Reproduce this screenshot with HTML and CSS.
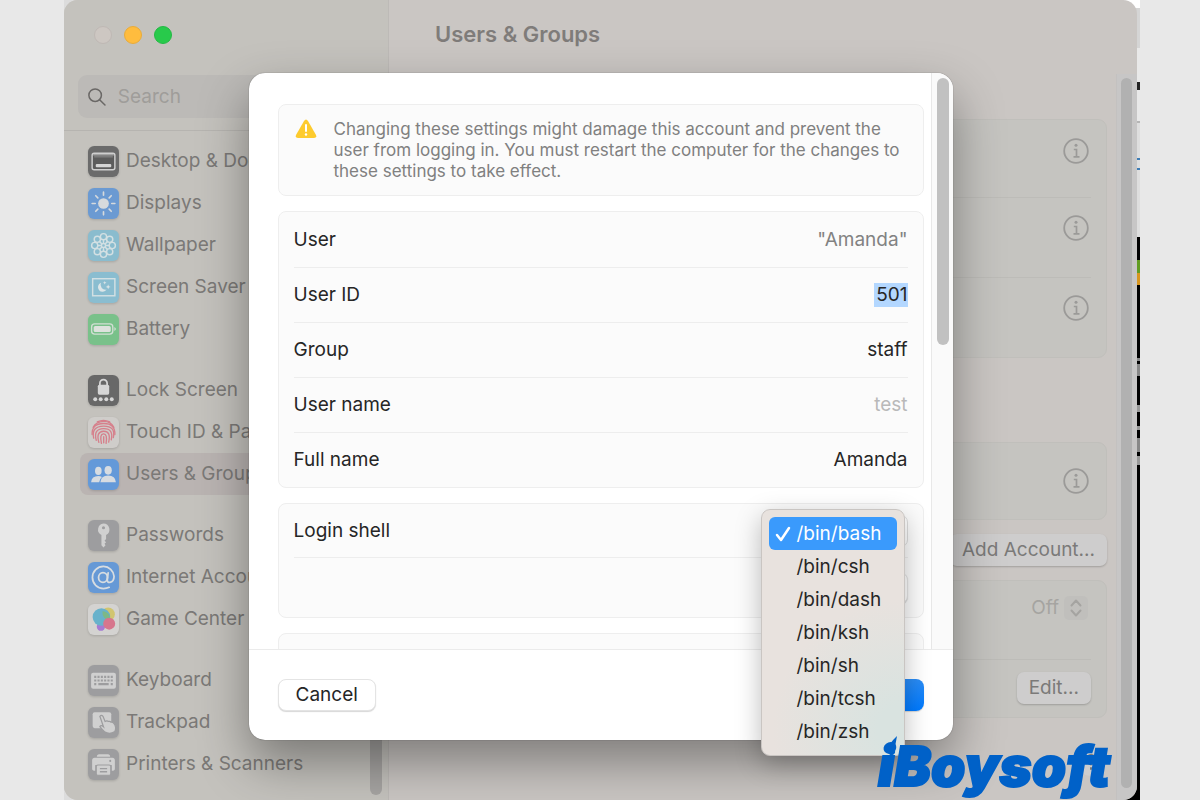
FILE: index.html
```html
<!DOCTYPE html>
<html lang="en">
<head>
    <meta charset="UTF-8">
    <meta name="viewport" content="width=device-width, initial-scale=1.0">
    <title>Users &amp; Groups</title>
    <link rel="stylesheet" href="styles.css">
</head>
<body>
    <div class="desktop">
        <div class="window">
            <aside class="sidebar">
                <div class="lights">
                    <span class="light"></span>
                    <span class="light yellow"></span>
                    <span class="light green"></span>
                </div>
                <label class="search">
                    <svg width="20" height="20" viewBox="0 0 20 20" fill="none" stroke="#6a6866" stroke-width="1.700" stroke-linecap="round"><circle cx="8" cy="8" r="7"/><path d="M13 13l6 6"/></svg>
                    <input type="search" placeholder="Search" aria-label="Search">
                </label>
                <nav class="nav">
                    <div class="nav-group">
                        <a href="#"><svg class="icon" viewBox="0 0 30 30"><rect width="30" height="30" rx="6" fill="#6b6b6b"/><rect x="4" y="7" width="22" height="16" rx="2" fill="#5c5c5c" stroke="#cfcfcf" stroke-width="1.4"/><path d="M5 8.500h20" stroke="#a5a5a5" stroke-width="1.500"/><path d="M6 10.500h18" stroke="#8d8d8d"/><rect x="7.500" y="17.500" width="15" height="3" rx="1" fill="#d5d5d5"/></svg>Desktop &amp; Dock</a>
                        <a href="#"><svg class="icon" viewBox="0 0 30 30"><rect width="30" height="30" rx="6" fill="#6b9ad2"/><circle cx="15" cy="15" r="5.200" fill="#d6dadd"/><path d="M15 4v3M15 23v3M4 15h3M23 15h3M7.500 7.500l2 2M20.500 20.500l2 2M7.500 22.500l2-2M20.500 9.500l2-2" stroke="#d6dadd" stroke-width="1.600" stroke-linecap="round"/></svg>Displays</a>
                        <a href="#"><svg class="icon" viewBox="0 0 30 30"><rect width="30" height="30" rx="6" fill="#8abcce"/><g fill="none" stroke="#d3e0e3" stroke-width="1.400"><circle cx="15" cy="6.500" r="3"/><circle cx="21" cy="9" r="3"/><circle cx="23.500" cy="15" r="3"/><circle cx="21" cy="21" r="3"/><circle cx="15" cy="23.500" r="3"/><circle cx="9" cy="21" r="3"/><circle cx="6.500" cy="15" r="3"/><circle cx="9" cy="9" r="3"/><circle cx="15" cy="15" r="2"/><path d="M15 9v4M15 17v4M9 15h4M17 15h4M11 11l2.500 2.500M16.500 16.500L19 19M11 19l2.500-2.500M16.500 13.500L19 11"/></g></svg>Wallpaper</a>
                        <a href="#"><svg class="icon" viewBox="0 0 30 30"><rect width="30" height="30" rx="6" fill="#8abdd0"/><rect x="4.500" y="6.500" width="21.500" height="16.500" fill="none" stroke="#d3e0e3" stroke-width="1.400"/><path d="M12.500 10.500a4.500 4.500 0 1 0 5.500 6.500a4.800 4.800 0 0 1-5.500-6.500z" fill="#dde6e8"/><path d="M19.500 12l.7 1.700 1.700.7-1.700.7-.7 1.700-.7-1.700-1.700-.7 1.700-.7zM16.200 8.800l.5 1.200 1.200.5-1.200.5-.5 1.200-.5-1.200-1.200-.5 1.200-.5z" fill="#dde6e8"/></svg>Screen Saver</a>
                        <a href="#"><svg class="icon" viewBox="0 0 30 30"><rect width="30" height="30" rx="6" fill="#79c18a"/><rect x="3.500" y="9.500" width="20.500" height="10" rx="3" fill="none" stroke="#d2dfd4" stroke-width="1.300"/><rect x="5.500" y="11.500" width="16.500" height="6" rx="1.500" fill="#dde2dd"/><path d="M25.500 12.500q3 2 0 4z" fill="#d2dfd4"/></svg>Battery</a>
                    </div>
                    <div class="nav-group">
                        <a href="#"><svg class="icon" viewBox="0 0 30 30"><rect width="30" height="30" rx="6" fill="#686868"/><path d="M11.500 10.500v-2.500a3.500 3.500 0 0 1 7 0v2.500" fill="none" stroke="#d6d6d6" stroke-width="1.700"/><rect x="9.500" y="9.500" width="11" height="9.500" rx="1.500" fill="#d6d6d6"/><g fill="#d6d6d6"><circle cx="7" cy="23.500" r="1.900"/><circle cx="12.300" cy="23.500" r="1.900"/><circle cx="17.700" cy="23.500" r="1.900"/><circle cx="23" cy="23.500" r="1.900"/></g></svg>Lock Screen</a>
                        <a href="#"><svg class="icon" viewBox="0 0 30 30"><rect width="30" height="30" rx="6" fill="#cfcdca"/><g fill="none" stroke="#d67f8b" stroke-width="1.300" stroke-linecap="round"><path d="M9 4.800q6-3 12 0"/><path d="M5 10q3-5.500 10-5.700T25 10"/><path d="M4 17q-.5-10.500 11-10.700T26 17"/><path d="M5.500 20.500q-2.500-11.500 9.500-11.700T24.500 20"/><path d="M8 22.500q-3-11 7-11.200T22.500 22"/><path d="M10.500 24.500q-3-10.500 4.500-10.700t5 10.500"/><path d="M13 25.500q-2-9 2-9.200t2.500 9.200M15.200 19v6"/></g></svg>Touch ID &amp; Password</a>
                        <a href="#" class="active"><svg class="icon" viewBox="0 0 30 30"><rect width="30" height="30" rx="6" fill="#6399d9"/><g fill="#d7dce1"><ellipse cx="10" cy="11.500" rx="3.200" ry="3.900"/><path d="M3 22.500q.5-6 7-6 2 0 3.500.8-2.500 2-2.700 5.200z"/><ellipse cx="19.500" cy="11" rx="3.500" ry="4.200"/><path d="M12 22.500q.5-6.500 7.500-6.500t7.500 6.500z"/></g></svg>Users &amp; Groups</a>
                    </div>
                    <div class="nav-group">
                        <a href="#"><svg class="icon" viewBox="0 0 30 30"><rect width="30" height="30" rx="6" fill="#9d9d9f"/><path fill-rule="evenodd" d="M15 3.500a5.800 5.800 0 0 1 2.500 11v4l-1.500 1.500 1.500 1.500-1.500 1.500 1 1.500-2 2-2-2v-10a5.800 5.800 0 0 1 2-11zm0 2.500a1.500 1.500 0 1 0 0 3a1.500 1.500 0 0 0 0-3z" fill="#d0d0d0"/></svg>Passwords</a>
                        <a href="#"><svg class="icon" viewBox="0 0 30 30"><rect width="30" height="30" rx="6" fill="#6699d6"/><g fill="none" stroke="#d8dde1" stroke-width="1.700" stroke-linecap="round"><ellipse cx="14.500" cy="15" rx="4.300" ry="4.800"/><path d="M19.500 10.500l-.8 6.500q-.2 3 2.500 2.800 4-.8 4-6A10.300 10.300 0 0 0 15 4.300A10.700 10.700 0 0 0 15 25.700q3 0 5.500-1.200"/></g></svg>Internet Accounts</a>
                        <a href="#"><svg class="icon" viewBox="0 0 30 30"><rect width="30" height="30" rx="6" fill="#d4d3d1"/><circle cx="19.500" cy="10" r="6.500" fill="#d1c570"/><circle cx="12.500" cy="22" r="4" fill="#a67bd3"/><circle cx="13" cy="12.500" r="8.500" fill="#68b2cb"/><path d="M14 7a7 7 0 0 1 7 9a8 8 0 0 1-7-9z" fill="#7db886"/><circle cx="20.500" cy="19" r="5.800" fill="#d7768d"/></svg>Game Center</a>
                    </div>
                    <div class="nav-group">
                        <a href="#"><svg class="icon" viewBox="0 0 30 30"><rect width="30" height="30" rx="6" fill="#9d9d9f"/><rect x="3" y="7.500" width="24" height="15.500" rx="2" fill="#d0d0d0"/><path d="M6 11.500h18M6 15h18" stroke="#9d9d9f" stroke-width="2" stroke-dasharray="2 1.200"/><path d="M6 18.500h2M10 18.500h10M22 18.500h2" stroke="#9d9d9f" stroke-width="2"/></svg>Keyboard</a>
                        <a href="#"><svg class="icon" viewBox="0 0 30 30"><rect width="30" height="30" rx="6" fill="#9d9d9f"/><rect x="4.500" y="5" width="18" height="15.500" rx="2" fill="#d0d0d0"/><path d="M11.500 9q1.500-2 3 0l2 5q2-1.200 3 0 2-.6 2.700.6 2-.2 2.800 1.200 3 3.700 1 8-5 3-9.500.5-2.500-2-5-5.300 1-2 3.500.1z" fill="#d0d0d0" stroke="#9d9d9f" stroke-width="1.200"/></svg>Trackpad</a>
                        <a href="#"><svg class="icon" viewBox="0 0 30 30"><rect width="30" height="30" rx="6" fill="#9d9d9f"/><path d="M8.500 7.500q0-2.500 2-2.500h9q2 0 2 2.500zM6.500 8.500h17q2.500 0 2.500 2.500v8q0 2-3 2v-5.500h-16v5.500q-3 0-3-2v-8q0-2.500 2.500-2.500z" fill="#d0d0d0"/><rect x="8" y="15.500" width="14" height="10" rx="1.500" fill="#d0d0d0" stroke="#9d9d9f"/><path d="M11.500 19h7M11.500 22h7" stroke="#9d9d9f" stroke-width="1.300"/><circle cx="21.500" cy="11.500" r="1" fill="#9d9d9f"/></svg>Printers &amp; Scanners</a>
                    </div>
                    <div class="nav-thumb"></div>
                </nav>
            </aside>

            <main class="main">
                <h1>Users &amp; Groups</h1>
                <div class="scroller">
                    <div class="content">
                        <section class="card">
                            <div class="account"><button class="info" aria-label="Info"><svg viewBox="0 0 26 26"><use href="#info"/></svg></button></div>
                            <div class="account"><button class="info" aria-label="Info"><svg viewBox="0 0 26 26"><use href="#info"/></svg></button></div>
                            <div class="account"><button class="info" aria-label="Info"><svg viewBox="0 0 26 26"><use href="#info"/></svg></button></div>
                        </section>
                        <section class="card groups">
                            <div class="account"><button class="info" aria-label="Info"><svg viewBox="0 0 26 26"><use href="#info"/></svg></button></div>
                        </section>
                        <button class="dim-button add">Add Account...</button>
                        <section class="card">
                            <div class="option">
                                <button class="picker">Off
                                    <svg width="24" height="24" viewBox="0 0 24 24" fill="none" stroke="#a5a4a1" stroke-width="2" stroke-linecap="round" stroke-linejoin="round"><path d="M7.500 9.500L12 4.500l4.500 5M7.500 14.500l4.500 5 4.500-5"/></svg>
                                </button>
                            </div>
                            <div class="option edit"><button class="dim-button">Edit...</button></div>
                        </section>
                        <button class="help" aria-label="Help">
                            <svg width="28" height="28" viewBox="0 0 28 28" fill="none" stroke="#7b7a79" stroke-width="2" stroke-linecap="round"><path d="M10 10q1-3 4-3t4 3q0 2-2 3.500t-2 3M14 20v1"/></svg>
                        </button>
                    </div>
                    <div class="track"><div class="thumb"></div></div>
                </div>
            </main>

            <form class="dialog">
                <div class="dialog-scroll">
                    <div class="dialog-content">
                        <div class="box warning">
                            <svg width="22" height="20" viewBox="0 0 22 20"><path d="M9 2q2-3 4 0l8 14q1 3-2 3H3q-3 0-2-3z" fill="#fdcb2e"/><path d="M11 6v6" stroke="#fff" stroke-width="2" stroke-linecap="round"/><circle cx="11" cy="15.500" r="1.200" fill="#fff"/></svg>
                            <p>Changing these settings might damage this account and prevent the user from logging in. You must restart the computer for the changes to these settings to take effect.</p>
                        </div>
                        <div class="box">
                            <div class="row"><span>User</span><span class="muted">"Amanda"</span></div>
                            <div class="row"><label for="uid">User ID</label><input id="uid" class="selected" type="text" value="501"></div>
                            <div class="row"><label for="group">Group</label><input id="group" type="text" value="staff"></div>
                            <div class="row"><label for="username">User name</label><input id="username" type="text" placeholder="test"></div>
                            <div class="row"><label for="fullname">Full name</label><input id="fullname" type="text" value="Amanda"></div>
                        </div>
                        <div class="box shell">
                            <div class="row">
                                <label for="shell">Login shell</label>
                                <select id="shell">
                                    <option>/bin/bash</option>
                                    <option>/bin/csh</option>
                                    <option>/bin/dash</option>
                                    <option>/bin/ksh</option>
                                    <option>/bin/sh</option>
                                    <option>/bin/tcsh</option>
                                    <option>/bin/zsh</option>
                                </select>
                            </div>
                            <div class="row"><button type="button" class="button small" aria-label="Choose"></button></div>
                        </div>
                        <div class="box"><div class="row"></div></div>
                    </div>
                    <div class="dialog-track"><div class="dialog-thumb"></div></div>
                </div>
                <div class="dialog-footer">
                    <button type="button" class="button">Cancel</button>
                    <button type="button" class="button primary" aria-label="OK"></button>
                </div>
                <ul class="menu">
                    <li class="checked"><svg width="16" height="16" viewBox="0 0 16 16" fill="none" stroke="#fff" stroke-width="2.500" stroke-linecap="round" stroke-linejoin="round"><path d="M2 9l4 5 8-12"/></svg>/bin/bash</li>
                    <li>/bin/csh</li>
                    <li>/bin/dash</li>
                    <li>/bin/ksh</li>
                    <li>/bin/sh</li>
                    <li>/bin/tcsh</li>
                    <li>/bin/zsh</li>
                </ul>
            </form>
        </div>
        <div class="brand">
            <svg width="12" height="20" viewBox="0 0 12 20"><path d="M10 0Q-2 11 2 18q3 3 6-1Q8 8 10 0z" fill="#0061c8"/></svg>
            <span>iBoysoft</span>
        </div>
    </div>

    <svg width="0" height="0" class="defs">
        <symbol id="info" viewBox="0 0 26 26">
            <circle cx="13" cy="13" r="11.800" fill="none" stroke="#9b9a98" stroke-width="1.800"/>
            <circle cx="13" cy="7.300" r="1.500" fill="#9b9a98"/>
            <path d="M10.800 11.500h2.700v7M10.500 18.800h6" fill="none" stroke="#9b9a98" stroke-width="1.700"/>
        </symbol>
    </svg>
</body>
</html>
```
FILE: styles.css
```css
* {
    box-sizing: border-box;
}
body {
    margin: 0;
    padding: 0 60px 0 64px;
    background-color: #e8e8e8;
    font-family: Inter, "Liberation Sans", sans-serif;
    font-size: 19px;
    line-height: 24px;
    color: #262626;
}
button, input, select {
    font: inherit;
    color: inherit;
}
.defs {
    position: absolute;
}

/* Strip of other windows behind the right edge */
.desktop {
    position: relative;
    height: 100vh;
    min-height: 800px;
    overflow: hidden;
    padding-right: 3px;
    background: linear-gradient(#fff 0 8px, #d5d5d5 8px 48px, #e9e9e9 48px 82px, #222 82px 90px, #e9e9e9 90px 121px, #b5b5b5 121px 123px, #dedede 123px 158px, #3f7db5 158px 160px, #dedede 160px 168px, #3f7db5 168px 170px, #dedede 170px 237px, #000 237px 260px, #619c22 260px 273px, #d8961f 273px 285px, #000 285px 358px, #888 358px 361px, #000 361px 364px, #888 364px 376px, #000 376px 405px, #999 405px 412px, #000 412px 426px, #999 426px 430px, #000 430px 438px, #888 438px 452px, #000 452px 456px, #999 456px 465px, #000 465px) right / 16px 100% no-repeat #dcdcdc;
}
.window {
    position: relative;
    display: flex;
    height: 100%;
    overflow: hidden;
    border-radius: 14px;
    background-color: #cac6c3;
}

/* Sidebar */
.sidebar {
    display: flex;
    flex-direction: column;
    width: 325px;
    border-right: 1px solid #bdbab7;
    background-color: #c4c2bd;
}
.lights {
    flex: none;
    display: flex;
    gap: 12px;
    padding: 26px 30px 0;
    height: 75px;
}
.light {
    width: 18px;
    height: 18px;
    border: 1px solid #bfb8b4;
    border-radius: 50%;
    background-color: #cdc7c2;
}
.light.yellow {
    border-color: #e9ac3a;
    background-color: #ffbc3e;
}
.light.green {
    border-color: #23b944;
    background-color: #28ca4b;
}
.search {
    flex: none;
    display: flex;
    align-items: center;
    gap: 12px;
    margin: 0 10px 12px 14px;
    padding: 0 10px;
    height: 43px;
    border-radius: 9px;
    background-color: #bcbab7;
}
.search input {
    width: 100%;
    padding: 0;
    border: 0;
    outline: 0;
    background: none;
}
.search input::placeholder {
    color: #9f9d9a;
}
.nav {
    position: relative;
    flex: 1;
    min-height: 0;
    padding: 9px 8px 0 16px;
    border-top: 1px solid #b6b4b0;
}
.nav-group {
    margin-bottom: 19px;
}
.nav a {
    display: flex;
    align-items: center;
    gap: 7px;
    height: 42px;
    padding-left: 8px;
    border-radius: 8px;
    color: #7b7977;
    text-decoration: none;
    white-space: nowrap;
}
.nav a.active {
    background-color: #bab4b2;
}
.icon {
    width: 31px;
    height: 31px;
    filter: drop-shadow(0 1px 1px rgba(0, 0, 0, 0.15));
}
.nav-thumb {
    position: absolute;
    right: 6px;
    top: 200px;
    bottom: 5px;
    width: 12px;
    border-radius: 6px;
    background-color: #a6a4a2;
}

/* Main pane behind the dialog */
.main {
    flex: 1;
    display: flex;
    flex-direction: column;
    min-width: 0;
}
h1 {
    margin: 0;
    padding: 22px 46px 0;
    height: 74px;
    font-size: 22px;
    font-weight: 600;
    color: #7f7c7a;
}
.scroller {
    flex: 1;
    display: flex;
}
.content {
    flex: 1;
    display: flex;
    flex-direction: column;
    padding: 45px 9px 0 20px;
}
.card {
    padding: 0 15px;
    border: 1px solid #c0bfbb;
    border-radius: 9px;
    background-color: #c5c4c0;
}
.card.groups {
    margin-top: 84px;
}
.account {
    display: flex;
    align-items: center;
    justify-content: flex-end;
    height: 77px;
    padding-bottom: 16px;
}
.account + .account, .option + .option {
    border-top: 1px solid #bdbcb8;
}
.account + .account {
    height: 80px;
    padding-bottom: 20px;
}
.groups .account {
    height: 76px;
    padding: 0;
}
.info {
    width: 26px;
    height: 26px;
    margin-right: 2px;
    padding: 0;
    border: 0;
    background: none;
}
.info svg, .help svg {
    display: block;
}
.dim-button {
    height: 32px;
    padding: 0 12px;
    border: 0;
    border-radius: 7px;
    background-color: #cecdcd;
    color: #7b7a79;
    box-shadow: 0 1px 2px rgba(0, 0, 0, 0.2);
}
.dim-button.add {
    align-self: flex-end;
    margin: 14px 0;
}
.option {
    display: flex;
    align-items: flex-start;
    justify-content: flex-end;
    height: 78px;
    padding-top: 15px;
}
.option.edit {
    height: 58px;
    padding-top: 12px;
}
.picker {
    display: flex;
    align-items: center;
    gap: 5px;
    padding: 0 3px 0 0;
    border: 0;
    background: none;
    color: #a5a4a1;
}
.picker svg {
    border-radius: 5px;
    background-color: #c0bfbc;
}
.help {
    align-self: flex-end;
    width: 28px;
    height: 28px;
    margin: 30px 2px 0;
    padding: 0;
    border: 0;
    border-radius: 50%;
    background-color: #cecdcd;
}
.track {
    width: 21px;
    padding: 4px 5px 12px 4px;
    border-left: 1px solid #c3c1c0;
    background-color: #c7c6c6;
}
.thumb {
    height: 100%;
    border-radius: 6px;
    background-color: #b1b1b1;
}

/* Dialog */
.dialog {
    position: absolute;
    top: 73px;
    bottom: 60px;
    left: 50%;
    width: 704px;
    margin-left: -352px;
    display: flex;
    flex-direction: column;
    border-radius: 16px;
    background-color: #fff;
    box-shadow: 0 0 1px rgba(0, 0, 0, 0.6), 0 22px 50px rgba(0, 0, 0, 0.38);
}
.dialog-scroll {
    flex: 1;
    display: flex;
    min-height: 0;
    overflow: hidden;
    border-radius: 16px 16px 0 0;
}
.dialog-content {
    flex: 1;
    display: flex;
    flex-direction: column;
    gap: 15px;
    padding: 31px 7px 0 29px;
}
.box {
    flex: none;
    padding: 0 15px;
    border: 1px solid #eeeeee;
    border-radius: 8px;
    background-color: #fbfbfb;
}
.warning {
    display: flex;
    gap: 17px;
    height: 92px;
    padding: 14px 16px;
    font-size: 17px;
    line-height: 21px;
    color: #808080;
}
.warning svg {
    flex: none;
}
.warning p {
    margin: 0;
}
.row {
    display: flex;
    align-items: center;
    justify-content: space-between;
    height: 55px;
}
.row + .row {
    border-top: 1px solid #ededed;
}
.row input {
    width: 200px;
    height: 24px;
    padding: 0;
    border: 0;
    background: none;
    text-align: right;
}
.row input::placeholder {
    color: #b9b9b9;
}
.row input.selected {
    width: 34px;
    background-color: #b3d7ff;
}
.muted {
    color: #828282;
}
.shell .row {
    height: 53px;
}
.shell .row + .row {
    height: 60px;
    justify-content: flex-end;
}
.row select {
    width: 140px;
    height: 32px;
    border: 1px solid #dcdcdc;
    border-radius: 7px;
    background-color: #fff;
    appearance: none;
}
.dialog-track {
    width: 22px;
    padding: 5px 4px 0 5px;
    border-left: 1px solid #e8e8e8;
    background-color: #fafafa;
}
.dialog-thumb {
    height: 267px;
    border-radius: 6px;
    background-color: #c1c1c1;
}
.dialog-footer {
    display: flex;
    justify-content: space-between;
    align-items: center;
    height: 91px;
    padding: 0 29px;
    border-top: 1px solid #ebebeb;
}
.button {
    height: 32px;
    padding: 0 17px;
    border: 1px solid #e4e4e4;
    border-radius: 8px;
    background-color: #fff;
    box-shadow: 0 1px 1px rgba(0, 0, 0, 0.16);
}
.button.small {
    width: 100px;
}
.button.primary {
    width: 97px;
    border: 0;
    background: linear-gradient(#2a8cf5, #007aff);
}

/* Open list of shells */
.menu {
    position: absolute;
    top: 436px;
    right: 48px;
    width: 144px;
    margin: 0;
    padding: 7px;
    border: 1px solid #c9c5c2;
    border-radius: 9px;
    background: radial-gradient(circle at 100% 90%, #d9e3e0 10%, #e8e2de 50%);
    box-shadow: 0 8px 26px rgba(0, 0, 0, 0.26);
    list-style: none;
}
.menu li {
    display: flex;
    align-items: center;
    height: 33px;
    padding-left: 28px;
}
.menu li.checked {
    gap: 6px;
    padding-left: 6px;
    border-radius: 6px;
    background-color: #3a9afc;
    color: #fff;
}

/* Logo over the lower right corner */
.brand {
    position: absolute;
    right: 30px;
    bottom: -2px;
    color: #0061c8;
    font-size: 55px;
    font-style: italic;
    font-weight: 900;
    line-height: 72px;
    -webkit-text-stroke: 2px #0061c8;
}
.brand svg {
    position: absolute;
    left: 9px;
    top: 6px;
}
```
